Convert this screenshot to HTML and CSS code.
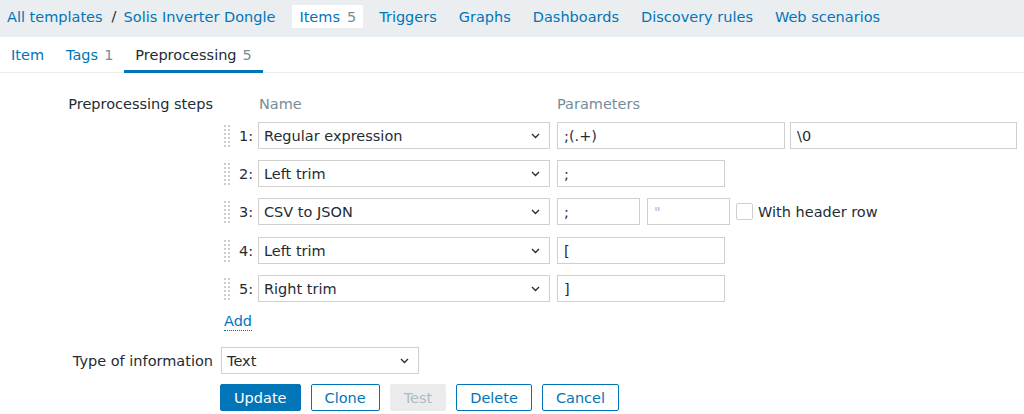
FILE: index.html
```html
<!DOCTYPE html>
<html>
<head>
<meta charset="utf-8">
<link rel="stylesheet" href="styles.css">
</head>
<body>
<nav class="nav">
  <a class="nav-item">All templates</a>
  <span class="sep">/</span>
  <a class="nav-item">Solis Inverter Dongle</a>
  <a class="nav-item active">Items <span class="count">5</span></a>
  <a class="nav-item">Triggers</a>
  <a class="nav-item">Graphs</a>
  <a class="nav-item">Dashboards</a>
  <a class="nav-item">Discovery rules</a>
  <a class="nav-item">Web scenarios</a>
</nav>
<div class="tabs">
  <a class="tab">Item</a>
  <a class="tab">Tags <span class="count">1</span></a>
  <a class="tab current">Preprocessing <span class="count">5</span></a>
</div>
<form class="form">
  <div class="label top">Preprocessing steps</div>
  <div class="field steps">
    <div class="step head">
      <span class="pad"></span>
      <span class="col-name">Name</span>
      <span class="col-params">Parameters</span>
    </div>
    <div class="step">
      <svg class="handle" width="6" height="22" viewBox="0 0 6 22"><g fill="#c8cfd3"><rect x="0" y="0" width="2" height="2"/><rect x="4" y="0" width="2" height="2"/><rect x="0" y="4" width="2" height="2"/><rect x="4" y="4" width="2" height="2"/><rect x="0" y="8" width="2" height="2"/><rect x="4" y="8" width="2" height="2"/><rect x="0" y="12" width="2" height="2"/><rect x="4" y="12" width="2" height="2"/><rect x="0" y="16" width="2" height="2"/><rect x="4" y="16" width="2" height="2"/><rect x="0" y="20" width="2" height="2"/><rect x="4" y="20" width="2" height="2"/></g></svg>
      <span class="num">1:</span>
      <div class="select step-select"><span>Regular expression</span><svg class="chev" width="9" height="6" viewBox="0 0 9 6"><path d="M1 1l3.5 3.5L8 1" fill="none" stroke="#1f2c33" stroke-width="1.3"/></svg></div>
      <div class="input w228">;(.+)</div>
      <div class="input w227">\0</div>
    </div>
    <div class="step">
      <svg class="handle" width="6" height="22" viewBox="0 0 6 22"><g fill="#c8cfd3"><rect x="0" y="0" width="2" height="2"/><rect x="4" y="0" width="2" height="2"/><rect x="0" y="4" width="2" height="2"/><rect x="4" y="4" width="2" height="2"/><rect x="0" y="8" width="2" height="2"/><rect x="4" y="8" width="2" height="2"/><rect x="0" y="12" width="2" height="2"/><rect x="4" y="12" width="2" height="2"/><rect x="0" y="16" width="2" height="2"/><rect x="4" y="16" width="2" height="2"/><rect x="0" y="20" width="2" height="2"/><rect x="4" y="20" width="2" height="2"/></g></svg>
      <span class="num">2:</span>
      <div class="select step-select"><span>Left trim</span><svg class="chev" width="9" height="6" viewBox="0 0 9 6"><path d="M1 1l3.5 3.5L8 1" fill="none" stroke="#1f2c33" stroke-width="1.3"/></svg></div>
      <div class="input w168">;</div>
    </div>
    <div class="step">
      <svg class="handle" width="6" height="22" viewBox="0 0 6 22"><g fill="#c8cfd3"><rect x="0" y="0" width="2" height="2"/><rect x="4" y="0" width="2" height="2"/><rect x="0" y="4" width="2" height="2"/><rect x="4" y="4" width="2" height="2"/><rect x="0" y="8" width="2" height="2"/><rect x="4" y="8" width="2" height="2"/><rect x="0" y="12" width="2" height="2"/><rect x="4" y="12" width="2" height="2"/><rect x="0" y="16" width="2" height="2"/><rect x="4" y="16" width="2" height="2"/><rect x="0" y="20" width="2" height="2"/><rect x="4" y="20" width="2" height="2"/></g></svg>
      <span class="num">3:</span>
      <div class="select step-select"><span>CSV to JSON</span><svg class="chev" width="9" height="6" viewBox="0 0 9 6"><path d="M1 1l3.5 3.5L8 1" fill="none" stroke="#1f2c33" stroke-width="1.3"/></svg></div>
      <div class="input w83">;</div>
      <div class="input w83 placeholder">"</div>
      <span class="checkbox"></span>
      <span class="check-label">With header row</span>
    </div>
    <div class="step">
      <svg class="handle" width="6" height="22" viewBox="0 0 6 22"><g fill="#c8cfd3"><rect x="0" y="0" width="2" height="2"/><rect x="4" y="0" width="2" height="2"/><rect x="0" y="4" width="2" height="2"/><rect x="4" y="4" width="2" height="2"/><rect x="0" y="8" width="2" height="2"/><rect x="4" y="8" width="2" height="2"/><rect x="0" y="12" width="2" height="2"/><rect x="4" y="12" width="2" height="2"/><rect x="0" y="16" width="2" height="2"/><rect x="4" y="16" width="2" height="2"/><rect x="0" y="20" width="2" height="2"/><rect x="4" y="20" width="2" height="2"/></g></svg>
      <span class="num">4:</span>
      <div class="select step-select"><span>Left trim</span><svg class="chev" width="9" height="6" viewBox="0 0 9 6"><path d="M1 1l3.5 3.5L8 1" fill="none" stroke="#1f2c33" stroke-width="1.3"/></svg></div>
      <div class="input w168">[</div>
    </div>
    <div class="step">
      <svg class="handle" width="6" height="22" viewBox="0 0 6 22"><g fill="#c8cfd3"><rect x="0" y="0" width="2" height="2"/><rect x="4" y="0" width="2" height="2"/><rect x="0" y="4" width="2" height="2"/><rect x="4" y="4" width="2" height="2"/><rect x="0" y="8" width="2" height="2"/><rect x="4" y="8" width="2" height="2"/><rect x="0" y="12" width="2" height="2"/><rect x="4" y="12" width="2" height="2"/><rect x="0" y="16" width="2" height="2"/><rect x="4" y="16" width="2" height="2"/><rect x="0" y="20" width="2" height="2"/><rect x="4" y="20" width="2" height="2"/></g></svg>
      <span class="num">5:</span>
      <div class="select step-select"><span>Right trim</span><svg class="chev" width="9" height="6" viewBox="0 0 9 6"><path d="M1 1l3.5 3.5L8 1" fill="none" stroke="#1f2c33" stroke-width="1.3"/></svg></div>
      <div class="input w168">]</div>
    </div>
    <div class="add-row"><a class="add">Add</a></div>
  </div>
  <div class="label mid">Type of information</div>
  <div class="field type-field">
    <div class="select type-select"><span>Text</span><svg class="chev" width="9" height="6" viewBox="0 0 9 6"><path d="M1 1l3.5 3.5L8 1" fill="none" stroke="#1f2c33" stroke-width="1.3"/></svg></div>
  </div>
  <div class="label"></div>
  <div class="field buttons">
    <span class="btn primary">Update</span>
    <span class="btn">Clone</span>
    <span class="btn disabled">Test</span>
    <span class="btn">Delete</span>
    <span class="btn">Cancel</span>
  </div>
</form>
</body>
</html>
```

FILE: styles.css
```css
* { box-sizing: border-box; }
html, body { margin: 0; padding: 0; background: #fff; }
body {
  font-family: "DejaVu Sans", sans-serif;
  font-size: 14.5px;
  color: #1f2c33;
  width: 1024px;
  height: 414px;
  overflow: hidden;
}
a { color: #0275b8; text-decoration: none; }
.count { color: #768d99; }

.nav {
  display: flex;
  align-items: flex-start;
  height: 37px;
  padding-top: 5px;
  background: #ebeef0;
  gap: 8px;
}
.nav-item {
  display: flex;
  align-items: center;
  height: 23px;
  padding: 0 7px;
  white-space: nowrap;
}
.nav-item.active { background: #fff; margin-left: 2px; margin-right: 1px; }
.nav-item.active .count { margin-left: 7px; }
.sep { width: 0; height: 23px; line-height: 23px; margin: 0 -3px 0 -6px; color: #1f2c33; }

.tabs {
  display: flex;
  height: 36px;
  border-bottom: 1px solid #ebeef0;
}
.tab {
  display: flex;
  align-items: center;
  padding: 0 11px;
  white-space: nowrap;
  position: relative;
}
.tab .count { margin-left: 6px; }
.tab.current { color: #1f2c33; }
.tab.current::after {
  content: "";
  position: absolute;
  left: 0; right: 0; bottom: -1px;
  height: 3px;
  background: #0275b8;
}

.form {
  display: grid;
  grid-template-columns: 213px 1fr;
  column-gap: 8px;
  padding-top: 21px;
}
.label { text-align: right; white-space: nowrap; }
.label.top { line-height: 20px; }
.label.mid { display: flex; align-items: center; justify-content: flex-end; margin-top: 15px; height: 27px; }

.steps { display: flex; flex-direction: column; gap: 11px; padding-left: 3px; }
.step { display: flex; align-items: center; height: 27px; }
.step.head { height: 20px; line-height: 20px; color: #768d99; margin-bottom: -3px; }
.step:nth-child(5) { margin-top: 1px; }
.head .pad { width: 35px; }
.head .col-name { width: 298px; }
.handle { display: block; margin-right: 9px; flex: none; }
.num { width: 19px; flex: none; }

.select {
  display: flex;
  align-items: center;
  justify-content: space-between;
  height: 27px;
  border: 1px solid #cfcfcf;
  background: #fff;
  padding: 0 9px 0 5px;
  flex: none;
}
.chev { display: block; }
.step-select { width: 292px; margin-right: 7px; }

.input {
  height: 27px;
  border: 1px solid #cfcfcf;
  padding: 0 6px;
  display: flex;
  align-items: center;
  flex: none;
  white-space: nowrap;
}
.input.placeholder { color: #acbbc2; }
.w228 { width: 228px; margin-right: 5px; }
.w227 { width: 227px; }
.w168 { width: 168px; }
.w83 { width: 83px; margin-right: 7px; }
.w83 + .w83 { margin-right: 6px; }
.checkbox {
  width: 17px; height: 17px;
  border: 1px solid #cfcfcf;
  border-radius: 2px;
  margin-right: 5px;
  flex: none;
}
.check-label { white-space: nowrap; }

.add-row { height: 20px; margin-top: -1px; }
.add {
  display: inline-block;
  line-height: 18px;
  border-bottom: 1px dotted #0275b8;
}

.type-field { margin-top: 15px; }
.type-select { width: 198px; }

.buttons { display: flex; gap: 10px; margin-top: 10px; }
.btn {
  display: flex;
  align-items: center;
  height: 27px;
  padding: 0 13px;
  border: 1px solid #0275b8;
  border-radius: 2px;
  color: #0275b8;
  background: #fff;
  white-space: nowrap;
}
.btn.primary { background: #0275b8; color: #fff; margin-left: -1px; }
.btn.disabled { background: #ebebeb; border-color: #ebebeb; color: #acbbc2; }
```
